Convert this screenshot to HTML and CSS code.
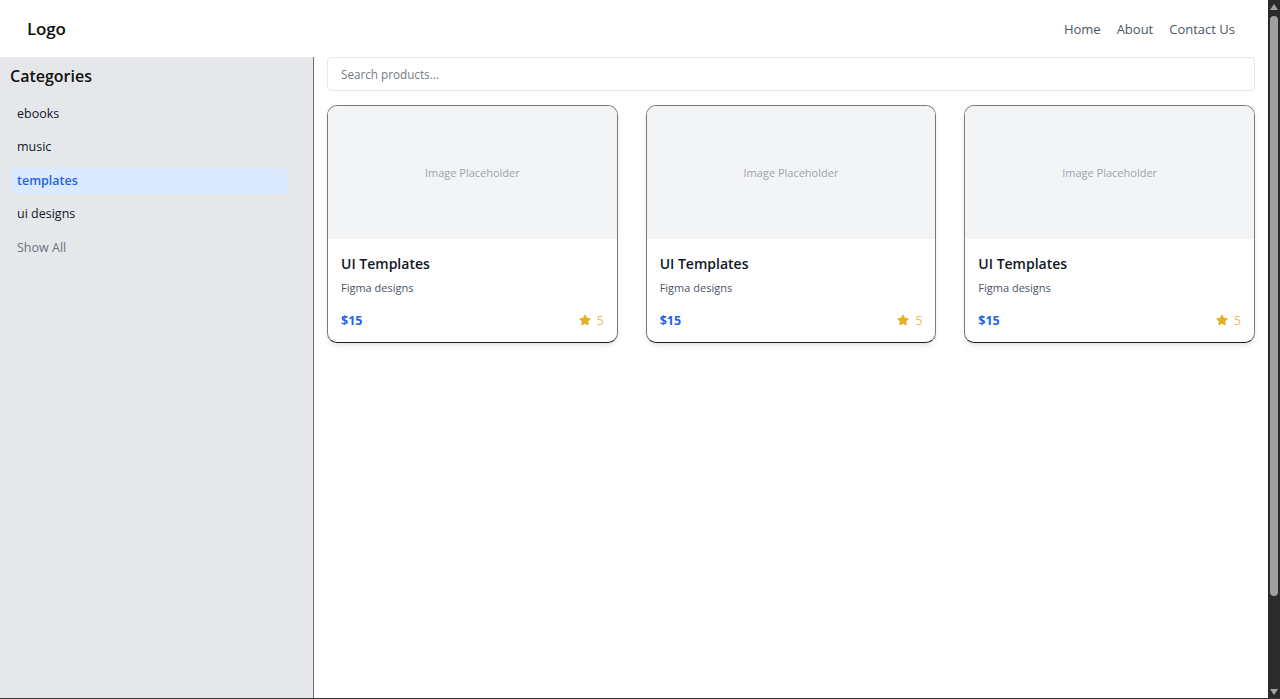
FILE: index.html
```html
<!DOCTYPE html>
<html lang="en">
<head>
<meta charset="utf-8">
<title>Store</title>
<link rel="stylesheet" href="styles.css">
</head>
<body>
<header class="topbar">
  <div class="logo">Logo</div>
  <nav class="nav">
    <a href="#">Home</a>
    <a href="#">About</a>
    <a href="#">Contact Us</a>
  </nav>
</header>
<div class="layout">
  <aside class="sidebar">
    <h2 class="side-title">Categories</h2>
    <ul class="cat-list">
      <li class="cat">ebooks</li>
      <li class="cat">music</li>
      <li class="cat active">templates</li>
      <li class="cat">ui designs</li>
      <li class="cat muted">Show All</li>
    </ul>
  </aside>
  <main class="main">
    <input class="search" type="text" placeholder="Search products...">
    <div class="grid">
      <div class="card">
        <div class="thumb">Image Placeholder</div>
        <div class="card-body">
          <div class="card-title">UI Templates</div>
          <div class="card-desc">Figma designs</div>
          <div class="card-foot">
            <span class="price">$15</span>
            <span class="rating"><svg class="star" viewBox="0 0 24 24"><path d="M12 2.8c.4 0 .8.2 1 .6l2.4 4.8 5.3.8c.9.1 1.2 1.2.6 1.8l-3.8 3.7.9 5.2c.2.9-.8 1.6-1.6 1.2L12 18.4l-4.8 2.5c-.8.4-1.8-.3-1.6-1.2l.9-5.2-3.8-3.7c-.6-.6-.3-1.7.6-1.8l5.3-.8L11 3.4c.2-.4.6-.6 1-.6z"/></svg>5</span>
          </div>
        </div>
      </div>
      <div class="card">
        <div class="thumb">Image Placeholder</div>
        <div class="card-body">
          <div class="card-title">UI Templates</div>
          <div class="card-desc">Figma designs</div>
          <div class="card-foot">
            <span class="price">$15</span>
            <span class="rating"><svg class="star" viewBox="0 0 24 24"><path d="M12 2.8c.4 0 .8.2 1 .6l2.4 4.8 5.3.8c.9.1 1.2 1.2.6 1.8l-3.8 3.7.9 5.2c.2.9-.8 1.6-1.6 1.2L12 18.4l-4.8 2.5c-.8.4-1.8-.3-1.6-1.2l.9-5.2-3.8-3.7c-.6-.6-.3-1.7.6-1.8l5.3-.8L11 3.4c.2-.4.6-.6 1-.6z"/></svg>5</span>
          </div>
        </div>
      </div>
      <div class="card">
        <div class="thumb">Image Placeholder</div>
        <div class="card-body">
          <div class="card-title">UI Templates</div>
          <div class="card-desc">Figma designs</div>
          <div class="card-foot">
            <span class="price">$15</span>
            <span class="rating"><svg class="star" viewBox="0 0 24 24"><path d="M12 2.8c.4 0 .8.2 1 .6l2.4 4.8 5.3.8c.9.1 1.2 1.2.6 1.8l-3.8 3.7.9 5.2c.2.9-.8 1.6-1.6 1.2L12 18.4l-4.8 2.5c-.8.4-1.8-.3-1.6-1.2l.9-5.2-3.8-3.7c-.6-.6-.3-1.7.6-1.8l5.3-.8L11 3.4c.2-.4.6-.6 1-.6z"/></svg>5</span>
          </div>
        </div>
      </div>
    </div>
  </main>
</div>
<div class="scrollbar" aria-hidden="true">
  <svg class="sb-arrow" viewBox="0 0 8 6"><path d="M4 0L8 6H0z"/></svg>
  <div class="sb-track"><div class="sb-thumb"></div></div>
  <svg class="sb-arrow" viewBox="0 0 8 6"><path d="M0 0H8L4 6z"/></svg>
</div>
<div class="frame-edge"></div>
</body>
</html>
```

FILE: styles.css
```css
* { box-sizing: border-box; }
html { background: #fff; }
body {
  margin: 0;
  padding-right: 12px;
  font-family: "Open Sans", "Noto Sans", "Liberation Sans", sans-serif;
  color: #111827;
  background: #fff;
}

.topbar {
  height: 57px;
  display: flex;
  align-items: center;
  justify-content: space-between;
  padding: 0 33px 0 27px;
  background: #fff;
}
.logo {
  font-size: 17px;
  font-weight: 600;
  color: #111;
  letter-spacing: -0.2px;
}
.nav { display: flex; gap: 16px; }
.nav a {
  font-size: 13px;
  color: #4b5563;
  text-decoration: none;
}

.layout {
  display: flex;
  height: calc(100vh - 57px);
}
.sidebar {
  width: 314px;
  flex: none;
  background: #e5e7eb;
  border-right: 1px solid #6f6f6f;
  padding: 8px 24px 0 10px;
}
.side-title {
  margin: 0 0 14px;
  font-size: 16px;
  line-height: 22px;
  font-weight: 600;
  color: #111;
}
.cat-list {
  list-style: none;
  margin: 0 0 0 1px;
  padding: 0;
  display: flex;
  flex-direction: column;
  gap: 7.4px;
}
.cat {
  height: 26px;
  line-height: 26px;
  padding: 0 6px;
  font-size: 12.5px;
  color: #111827;
  border-radius: 4px;
}
.cat.active {
  background: #dbeafe;
  color: #2563eb;
  font-weight: 600;
}
.cat.muted { color: #6b7280; }

.main {
  flex: 1;
  padding: 0 13px;
}
.search {
  display: block;
  width: 100%;
  height: 34px;
  border: 1px solid #e5e7eb;
  border-radius: 4px;
  padding: 0 13px;
  font-family: inherit;
  font-size: 11.7px;
  color: #111;
  outline: none;
  background: #fff;
}
.search::placeholder { color: #757b85; }

.grid {
  margin-top: 14px;
  display: grid;
  grid-template-columns: repeat(3, 1fr);
  gap: 28px;
}
.card {
  border: 1px solid #7a7a7a;
  border-bottom-color: #1f1f1f;
  border-radius: 10px;
  overflow: hidden;
  background: #fff;
  box-shadow: 0 4px 6px -1px rgba(0,0,0,0.08), 0 2px 4px -2px rgba(0,0,0,0.08);
}
.thumb {
  height: 133px;
  background: #f3f4f6;
  display: flex;
  align-items: center;
  justify-content: center;
  font-size: 11px;
  color: #9ca3af;
}
.card-body { padding: 15px 13px 13px; }
.card-title {
  font-size: 14px;
  line-height: 20px;
  font-weight: 600;
  color: #111827;
}
.card-desc {
  margin-top: 6px;
  font-size: 11px;
  line-height: 16px;
  color: #4b5563;
}
.card-foot {
  margin-top: 15px;
  height: 18px;
  display: flex;
  align-items: center;
  justify-content: space-between;
}
.price {
  font-size: 12.5px;
  font-weight: 700;
  color: #2563eb;
}
.rating {
  display: flex;
  align-items: center;
  gap: 5px;
  font-size: 12px;
  color: #e5c15a;
}
.star { width: 14px; height: 14px; fill: #e2b126; }

.scrollbar {
  position: fixed;
  top: 0;
  right: 0;
  bottom: 0;
  width: 12px;
  background: #2b2b2b;
  display: flex;
  flex-direction: column;
  align-items: center;
  padding: 4px 0 4px;
}
.sb-arrow {
  width: 8px;
  height: 6px;
  fill: #a3a3a3;
  flex: none;
}
.sb-track {
  flex: 1;
  width: 100%;
  padding: 6px 2px 93px;
}
.sb-thumb {
  height: 100%;
  background: #9f9f9f;
  border-radius: 4px;
}

.frame-edge {
  position: fixed;
  left: 0;
  right: 0;
  bottom: 0;
  height: 1px;
  background: #333;
}
```
